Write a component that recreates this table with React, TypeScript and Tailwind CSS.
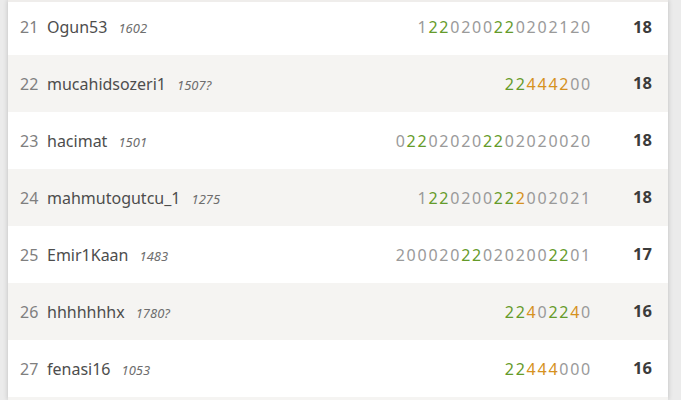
type Player = {
  rank: number;
  name: string;
  rating: string;
  sheet: string;
  score: number;
};

// "g" marks the next digit as a streak win (green), "f" as on fire (orange)
const players: Player[] = [
  { rank: 21, name: 'Ogun53', rating: '1602', sheet: '1g2g20200g2g20202120', score: 18 },
  { rank: 22, name: 'mucahidsozeri1', rating: '1507?', sheet: 'g2g2f4f4f4f200', score: 18 },
  { rank: 23, name: 'hacimat', rating: '1501', sheet: '0g2g202020g2g202020020', score: 18 },
  { rank: 24, name: 'mahmutogutcu_1', rating: '1275', sheet: '1g2g20200g2g2f2002021', score: 18 },
  { rank: 25, name: 'Emir1Kaan', rating: '1483', sheet: '200020g2g2020200g2g201', score: 17 },
  { rank: 26, name: 'hhhhhhhx', rating: '1780?', sheet: 'g2g2f40g2g2f40', score: 16 },
  { rank: 27, name: 'fenasi16', rating: '1053', sheet: 'g2g2f4f4f4000', score: 16 },
];

function Sheet({ sheet }: { sheet: string }) {
  const out: { ch: string; kind: 'plain' | 'win' | 'fire' }[] = [];
  let mode: 'plain' | 'win' | 'fire' = 'plain';
  for (const c of sheet) {
    if (c === 'g') { mode = 'win'; continue; }
    if (c === 'f') { mode = 'fire'; continue; }
    out.push({ ch: c, kind: mode });
    mode = 'plain';
  }
  return (
    <span className="tracking-[1.75px] text-[16px]">
      {out.map((d, i) => (
        <span
          key={i}
          className={
            d.kind === 'win' ? 'text-[#659b2a]' : d.kind === 'fire' ? 'text-[#d59120]' : 'text-[#9a9a9a]'
          }
        >
          {d.ch}
        </span>
      ))}
    </span>
  );
}

export default function App() {
  return (
    <div
      className="w-[681px] h-[400px] overflow-hidden bg-[#ebebeb] flex"
      style={{ fontFamily: '"Noto Sans", sans-serif' }}
    >
      <div className="ml-2 w-[660px] h-full bg-white shadow-[0_0_5px_rgba(0,0,0,0.2)] border-t-2 border-[#efedeb]">
        {players.map((p, i) => (
          <div
            key={p.rank}
            className={`flex items-center ${i === 0 ? 'h-[53px] pb-[3px]' : 'h-[57px]'} ${
              i % 2 === 1 ? 'bg-[#f5f4f2]' : 'bg-white'
            }`}
          >
            <div className="w-[39px] pl-3 text-[16px] text-[#7f7f7f]">{p.rank}</div>
            <div className="flex-1 flex items-baseline min-w-0">
              <span className="text-[16px] text-[#4d4d4d]">{p.name}</span>
              <span className="ml-[11px] text-[13px] italic text-[#6e6e6e]">{p.rating}</span>
            </div>
            <div className="text-right">
              <Sheet sheet={p.sheet} />
            </div>
            <div className="w-[76px] pr-4 text-right text-[16.5px] font-bold text-[#3b3b3b]">{p.score}</div>
          </div>
        ))}
        <div className="h-[57px] bg-[#f5f4f2]" />
      </div>
    </div>
  );
}
